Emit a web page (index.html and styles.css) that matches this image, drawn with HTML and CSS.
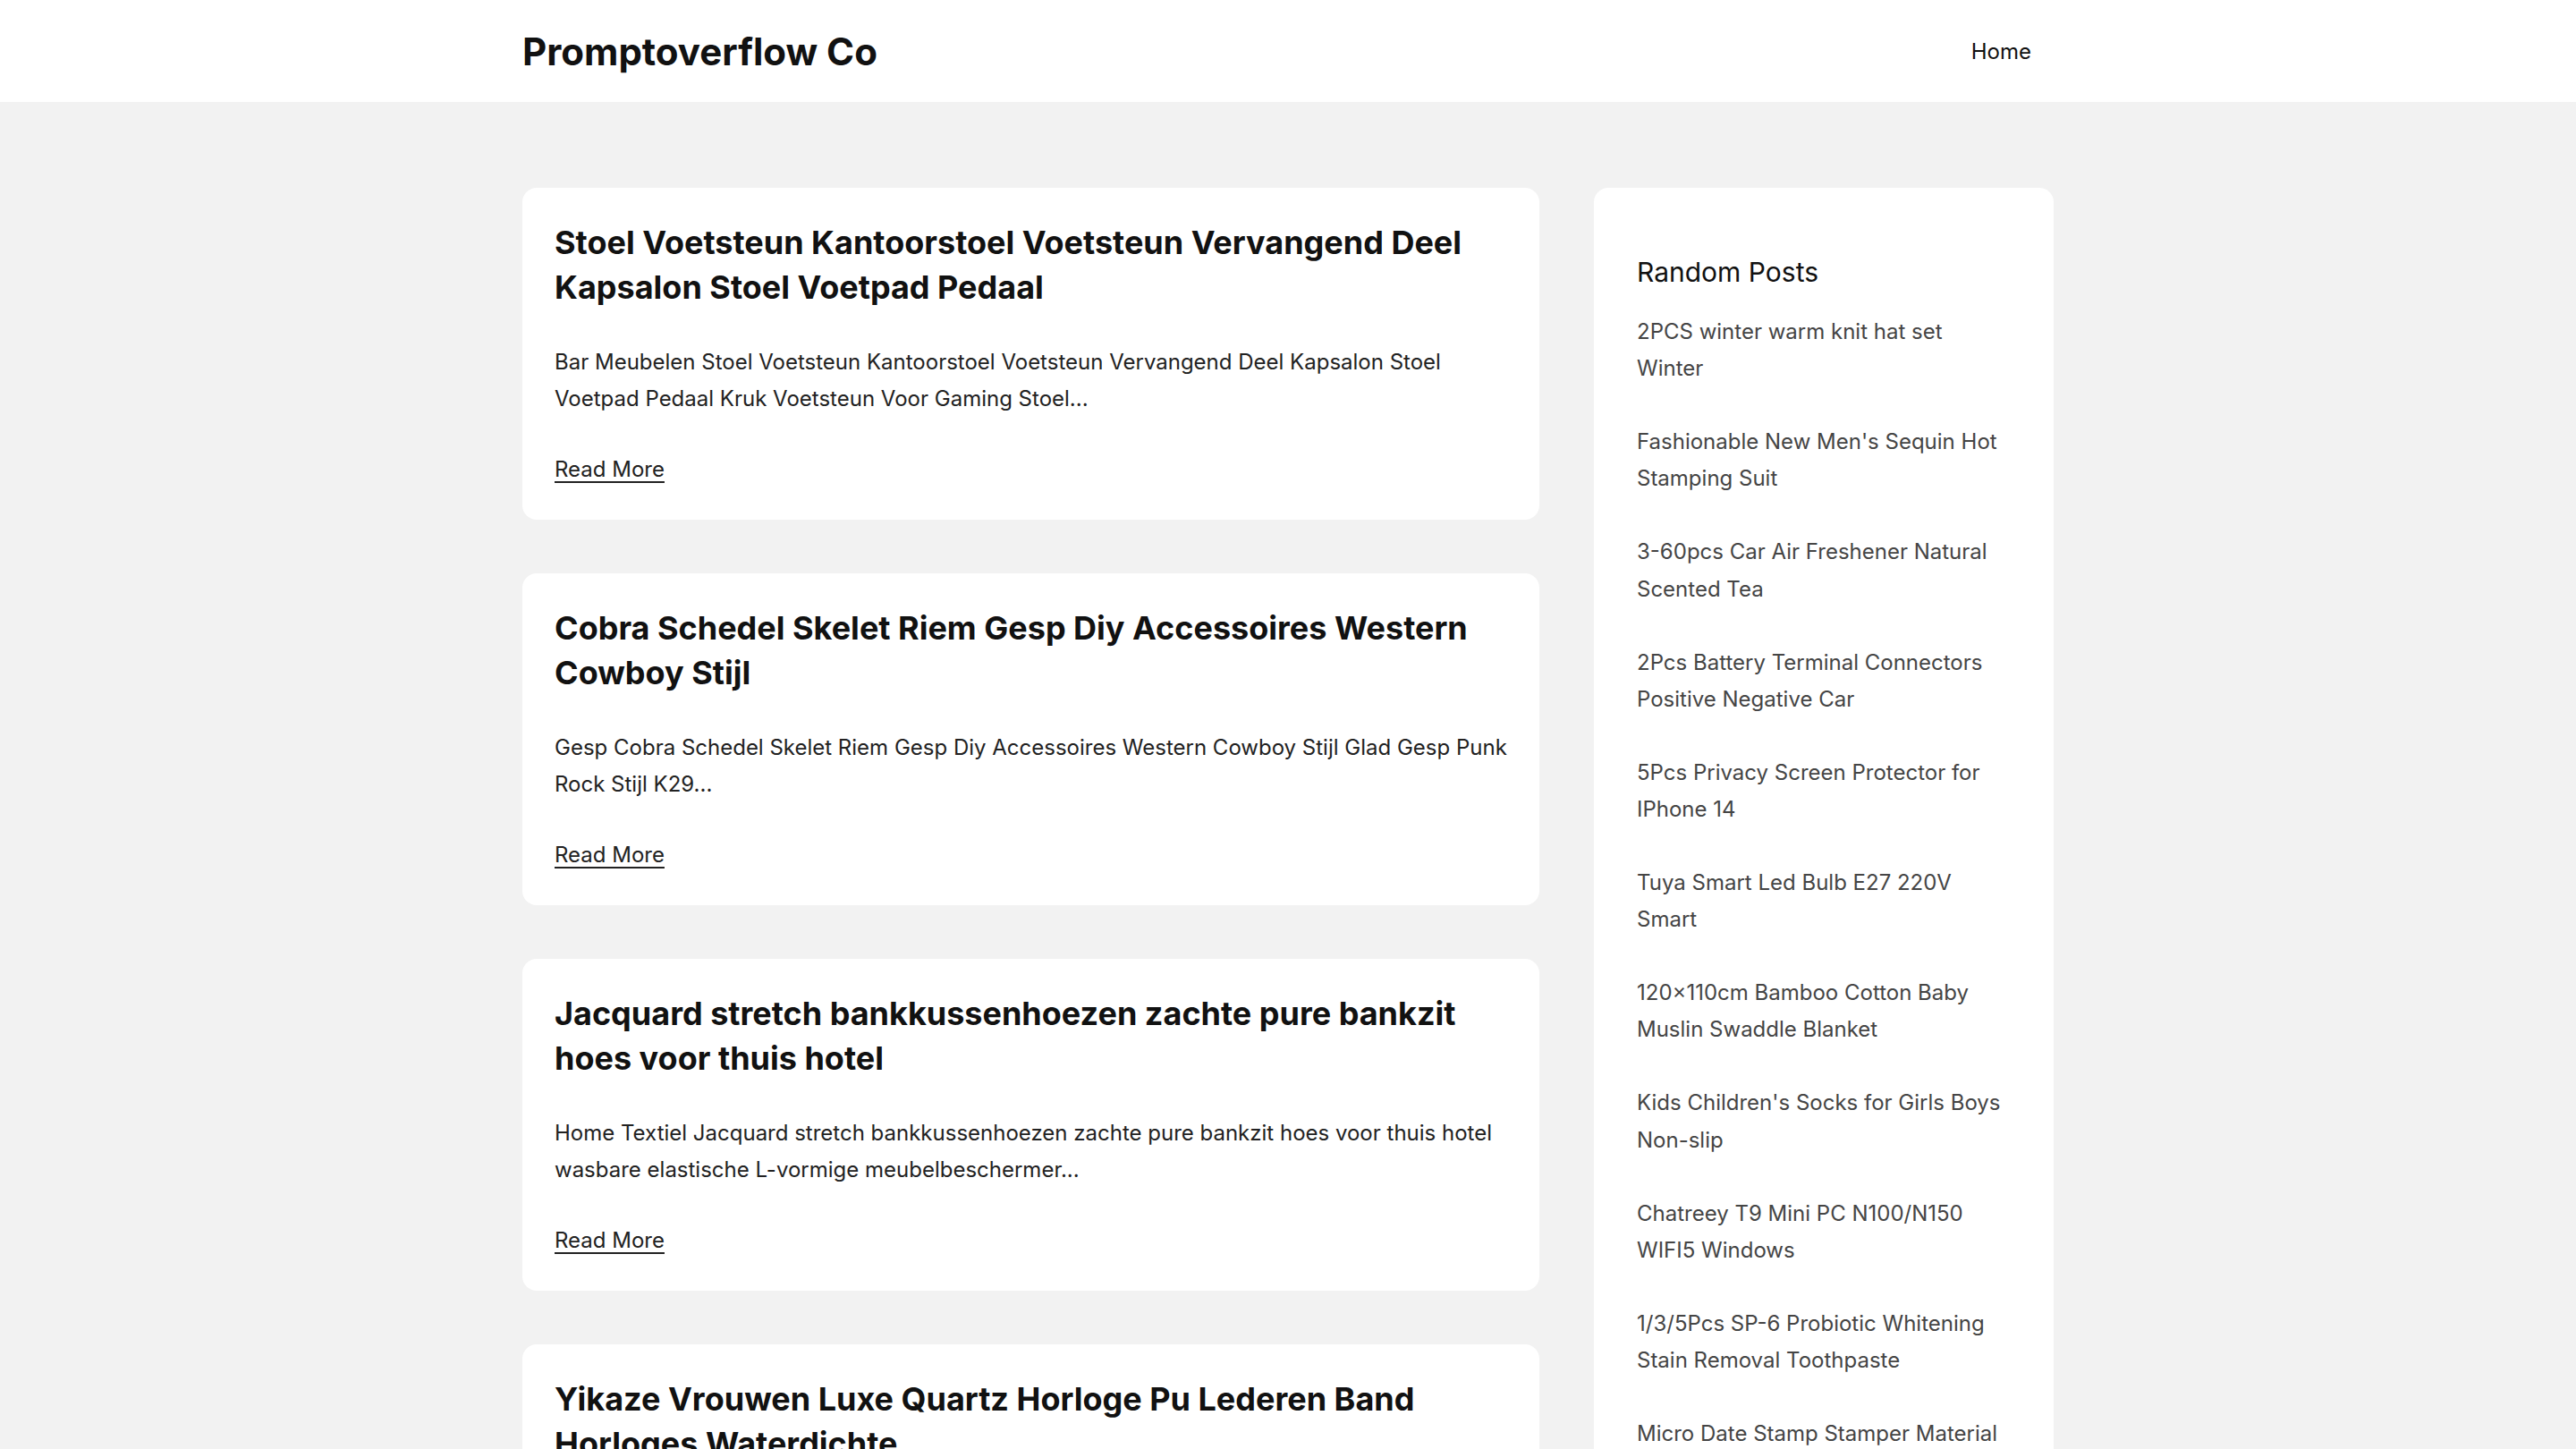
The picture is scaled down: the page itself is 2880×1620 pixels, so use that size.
FILE: index.html
```html
<!DOCTYPE html>
<html lang="nl">
<head>
<meta charset="utf-8">
<title>Promptoverflow Co</title>
<link rel="stylesheet" href="styles.css">
</head>
<body>
<header class="site-header">
  <div class="header-inner">
    <a class="logo" href="#">Promptoverflow Co</a>
    <nav class="nav"><a href="#">Home</a></nav>
  </div>
</header>
<div class="layout">
  <main class="posts">
    <article class="card">
      <h2 class="card-title">Stoel Voetsteun Kantoorstoel Voetsteun Vervangend Deel Kapsalon Stoel Voetpad Pedaal</h2>
      <p class="card-excerpt">Bar Meubelen Stoel Voetsteun Kantoorstoel Voetsteun Vervangend Deel Kapsalon Stoel Voetpad Pedaal Kruk Voetsteun Voor Gaming Stoel...</p>
      <a class="read-more" href="#">Read More</a>
    </article>
    <article class="card">
      <h2 class="card-title">Cobra Schedel Skelet Riem Gesp Diy Accessoires Western Cowboy Stijl</h2>
      <p class="card-excerpt">Gesp Cobra Schedel Skelet Riem Gesp Diy Accessoires Western Cowboy Stijl Glad Gesp Punk Rock Stijl K29...</p>
      <a class="read-more" href="#">Read More</a>
    </article>
    <article class="card">
      <h2 class="card-title">Jacquard stretch bankkussenhoezen zachte pure bankzit hoes voor thuis hotel</h2>
      <p class="card-excerpt">Home Textiel Jacquard stretch bankkussenhoezen zachte pure bankzit hoes voor thuis hotel wasbare elastische L-vormige meubelbeschermer...</p>
      <a class="read-more" href="#">Read More</a>
    </article>
    <article class="card">
      <h2 class="card-title">Yikaze Vrouwen Luxe Quartz Horloge Pu Lederen Band Horloges Waterdichte</h2>
      <p class="card-excerpt">Yikaze Vrouwen Luxe Quartz Horloge Pu Lederen Band Horloges Waterdichte...</p>
      <a class="read-more" href="#">Read More</a>
    </article>
  </main>
  <aside class="sidebar">
    <h3 class="sidebar-title">Random Posts</h3>
    <ul class="random-list">
      <li><a href="#">2PCS winter warm knit hat set Winter</a></li>
      <li><a href="#">Fashionable New Men's Sequin Hot Stamping Suit</a></li>
      <li><a href="#">3-60pcs Car Air Freshener Natural Scented Tea</a></li>
      <li><a href="#">2Pcs Battery Terminal Connectors Positive Negative Car</a></li>
      <li><a href="#">5Pcs Privacy Screen Protector for IPhone 14</a></li>
      <li><a href="#">Tuya Smart Led Bulb E27 220V Smart</a></li>
      <li><a href="#">120×110cm Bamboo Cotton Baby Muslin Swaddle Blanket</a></li>
      <li><a href="#">Kids Children's Socks for Girls Boys Non-slip</a></li>
      <li><a href="#">Chatreey T9 Mini PC N100/N150 WIFI5 Windows</a></li>
      <li><a href="#">1/3/5Pcs SP-6 Probiotic Whitening Stain Removal Toothpaste</a></li>
      <li><a href="#">Micro Date Stamp Stamper Material</a></li>
    </ul>
  </aside>
</div>
</body>
</html>
```
FILE: styles.css
```css
* { box-sizing: border-box; }
html, body { margin: 0; padding: 0; }
body {
  background: #f2f2f2;
  font-family: Inter, "Noto Sans", "Liberation Sans", sans-serif;
  color: #111;
}
a { color: inherit; text-decoration: none; }

.site-header {
  background: #fff;
  height: 114px;
}
.header-inner {
  width: 1712px;
  margin: 0 auto;
  height: 100%;
  display: flex;
  align-items: center;
  justify-content: space-between;
}
.logo {
  font-size: 42px;
  font-weight: 700;
  color: #111;
}
.nav { padding-right: 25px; }
.nav a {
  font-size: 24px;
  color: #111;
}

.layout {
  width: 1712px;
  margin: 96px auto 0;
  display: flex;
  align-items: flex-start;
  gap: 61px;
}
.posts {
  width: 1137px;
  display: flex;
  flex-direction: column;
  gap: 60px;
}
.card {
  background: #fff;
  border-radius: 16px;
  padding: 36px;
}
.card-title {
  margin: 0 0 38px;
  font-size: 36px;
  line-height: 50px;
  font-weight: 700;
  color: #111;
}
.card-excerpt {
  margin: 0 0 38px;
  font-size: 24px;
  line-height: 41px;
  color: #222;
}
.read-more {
  display: inline-block;
  font-size: 24px;
  line-height: 41px;
  color: #222;
  text-decoration: underline;
  text-decoration-thickness: 2px;
  text-underline-offset: 5px;
}

.sidebar {
  width: 514px;
  background: #fff;
  border-radius: 16px;
  padding: 76px 48px 48px;
}
.sidebar-title {
  margin: 0 0 28px;
  font-size: 30px;
  line-height: 36px;
  font-weight: 400;
  color: #111;
}
.random-list {
  list-style: none;
  margin: 0;
  padding: 0;
}
.random-list li {
  font-size: 24px;
  line-height: 41.3px;
  color: #454545;
  margin-bottom: 40.6px;
}
```
